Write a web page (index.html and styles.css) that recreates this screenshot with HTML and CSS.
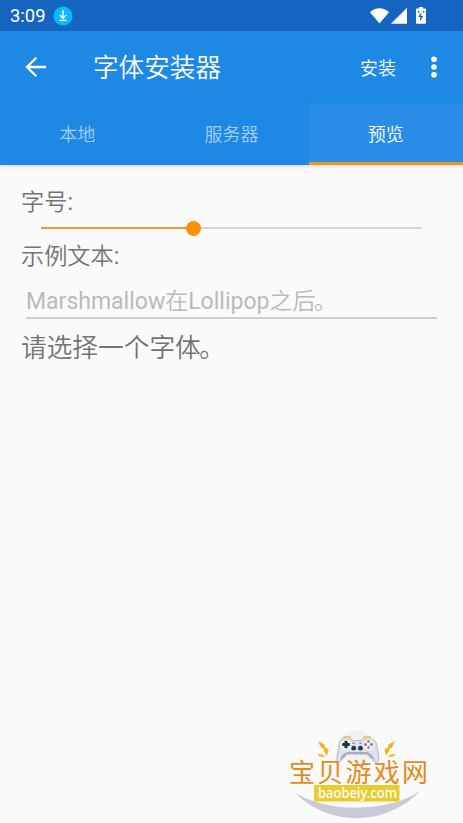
FILE: index.html
```
<!DOCTYPE html>
<html lang="zh-CN">
<head>
    <meta charset="UTF-8">
    <title>字体安装器</title>
    <link rel="stylesheet" href="styles.css">
</head>
<body>
    <div class="statusbar">
        <span class="clock">3:09</span>
        <svg class="download" width="20" height="20" viewBox="0 0 20 20">
            <circle cx="10" cy="10" r="9.6" fill="#08b9fb"/>
            <path d="M10 4.2v7.6M6.8 9l3.2 3.2L13.2 9M6.4 14.4h7.2" fill="none" stroke="#fff" stroke-width="1.4"/>
        </svg>
        <svg class="signals" width="58" height="20" viewBox="0 0 58 20" fill="#fff">
            <path d="M1 6.2C6.5.9 14.5.9 20 6.2L10.5 17.5z"/>
            <path d="M38 1.8v16H22z"/>
            <path d="M48 2.6h2V1h4v1.6H56q1 0 1 1v13.2q0 1-1 1h-8q-1 0-1-1v-13.2q0-1 1-1z"/>
            <path d="M52.5 6l-3.3 5h2.2l-.6 4.5 3.5-5.5h-2.2zM49 5h1.6v1.4H49zM53.8 5h1.6v1.4h-1.6z" fill="#1565c0"/>
        </svg>
    </div>

    <header class="toolbar">
        <svg class="back" width="22" height="22" viewBox="0 0 22 22">
            <path d="M21 11H2M11.3 1.7L2 11l9.3 9.3" fill="none" stroke="#fff" stroke-width="2.3"/>
        </svg>
        <h1>字体安装器</h1>
        <span class="action">安装</span>
        <svg class="more" width="6" height="22" viewBox="0 0 6 22" fill="#fff">
            <circle cx="3" cy="3.3" r="2.8"/>
            <circle cx="3" cy="11" r="2.8"/>
            <circle cx="3" cy="18.7" r="2.8"/>
        </svg>
    </header>

    <nav class="tabs">
        <div class="tab">本地</div>
        <div class="tab">服务器</div>
        <div class="tab active">预览</div>
    </nav>

    <main class="content">
        <div class="label">字号<span class="latin">:</span></div>
        <div class="slider">
            <div class="slider-fill"></div>
            <div class="slider-thumb"></div>
            <div class="slider-rest"></div>
        </div>
        <div class="label label-sample">示例文本<span class="latin">:</span></div>
        <div class="field"><span class="latin">Marshmallow</span>在<span class="latin">Lollipop</span>之后<span class="stop">。</span></div>
        <div class="preview">请选择一个字体<span class="stop">。</span></div>
    </main>

    <svg class="watermark" width="160" height="98" viewBox="0 0 160 98">
        <circle cx="77" cy="22" r="17" fill="#f0f1f2"/>
        <path d="M14 67C48 102 106 102 140 66C108 88 46 88 14 67z" fill="#c8cad9"/>
        <!-- rayos -->
        <g fill="#f5b324">
            <path d="M38 16l6.5 3.5.5 3 3.5 1.5L47 31l-3.5-5.5.5-1.5-3-1.5z"/>
            <path d="M115 16l-6.5 3.5-.5 3-3.5 1.5L106 31l3.5-5.5-.5-1.5 3-1.5z"/>
            <path d="M37.5 29l5 .5 3 2.5-6-.5zM115.5 29l-5 .5-3 2.5 6-.5z"/>
        </g>
        <!-- mando -->
        <path d="M64 13v-1h6v1M84 13v-1h6v1" fill="none" stroke="#edbd48" stroke-width="1.6"/>
        <path d="M62 14h9l2 1.5h8l2-1.5h9q4 1 5 7l2 12q0 5-4 4-3-1-8-8H67q-5 7-8 8-3 0-2-5l2-12q0-5 3-6z" fill="#dfe1ec" stroke="#b7b9cb" stroke-width="1"/>
        <path d="M60 35q2-7 8-8h19q5 1 8 8-3-1-8-6H67q-4 5-7 6z" fill="#a9acc0"/>
        <circle cx="66" cy="19.5" r="5.5" fill="#f3f4f8"/>
        <circle cx="88.5" cy="19.5" r="5.5" fill="#f3f4f8"/>
        <path d="M66 15.7v7.6M62.2 19.5h7.6" stroke="#173647" stroke-width="3"/>
        <g fill="#243a4b">
            <circle cx="73.7" cy="23.2" r="2.4"/>
            <circle cx="80.5" cy="23.2" r="2.4"/>
            <rect x="72.3" y="17.5" width="2.5" height="1.3" fill="#e75463"/>
            <rect x="79.3" y="17.5" width="2.5" height="1.3" fill="#4ca8b8"/>
        </g>
        <circle cx="88.5" cy="16.5" r="1.4" fill="#35aebc"/>
        <circle cx="88.5" cy="22.5" r="1.4" fill="#35aebc"/>
        <circle cx="85.5" cy="19.5" r="1.4" fill="#e6485c"/>
        <circle cx="91.5" cy="19.5" r="1.4" fill="#e6485c"/>
        <text class="wm-name" x="9" y="56.5" textLength="139">宝贝游戏网</text>
        <rect x="34" y="60" width="85.5" height="16.5" fill="#e9cd2e"/>
        <text class="wm-url" x="38" y="72.5" textLength="79" lengthAdjust="spacingAndGlyphs">baobeiy.com</text>
    </svg>
</body>
</html>
```
FILE: styles.css
```
body {
    margin: 0;
    height: 823px;
    position: relative;
    overflow: hidden;
    background-color: #fafafa;
    font-family: Roboto, "Noto Sans CJK SC", sans-serif;
    font-weight: 350;
    color: #737373;
}
.statusbar {
    display: flex;
    align-items: center;
    height: 31px;
    padding: 0 36px 0 10px;
    box-sizing: border-box;
    background-color: #1565c0;
    color: white;
}
.clock {
    font-size: 18.4px;
    font-weight: 400;
    line-height: 31px;
    width: 43px;
}
.signals {
    margin-left: auto;
}
.toolbar {
    position: relative;
    z-index: 1;
    display: flex;
    align-items: center;
    height: 72px;
    padding: 0 26px 0 25px;
    box-sizing: border-box;
    background-color: #1e88e5;
    color: white;
}
h1 {
    margin: 0 0 0 46px;
    padding-top: 2px;
    font-size: 25.6px;
    font-weight: 350;
    line-height: 38px;
}
.action {
    margin-left: auto;
    font-size: 18px;
}
.more {
    margin-left: 35px;
}
.tabs {
    display: flex;
    height: 62px;
    background-color: #1e88e5;
    box-shadow: 0 1px 4px rgba(0, 0, 0, 0.15);
}
.tab {
    flex: 1;
    box-sizing: border-box;
    font-size: 18px;
    line-height: 64px;
    text-align: center;
    color: #a5cff5;
}
.tab.active {
    background-color: #298de7;
    border-bottom: 3px solid #ee9526;
    color: white;
}
.content {
    padding: 20px 26px 0 21px;
}
.label {
    height: 34px;
    font-size: 23.2px;
    line-height: 35px;
}
.latin {
    font-weight: 400;
}
.stop {
    margin-left: -1.5px;
}
.slider {
    display: flex;
    align-items: center;
    height: 18px;
    margin: 0 15px 0 20px;
}
.slider-fill {
    width: 145px;
    height: 2px;
    background-color: #e89a35;
}
.slider-thumb {
    width: 15px;
    height: 15px;
    border-radius: 50%;
    background-color: #ff9100;
}
.slider-rest {
    flex: 1;
    height: 2px;
    background-color: #d5d5d5;
}
.label-sample {
    margin-top: 2px;
}
.field {
    margin-left: 5px;
    margin-top: 10px;
    height: 34px;
    border-bottom: 2px solid #cdcdcd;
    font-size: 23px;
    line-height: 37px;
    color: #bababa;
}
.preview {
    margin-top: 9px;
    font-size: 25.7px;
    line-height: 40px;
}
.watermark {
    position: absolute;
    left: 280px;
    top: 725px;
}
.wm-name {
    font-size: 26px;
    font-weight: 400;
    fill: #e58b1c;
}
.wm-url {
    font-family: "Noto Sans", sans-serif;
    font-size: 14px;
    font-weight: 500;
    fill: white;
}
```
